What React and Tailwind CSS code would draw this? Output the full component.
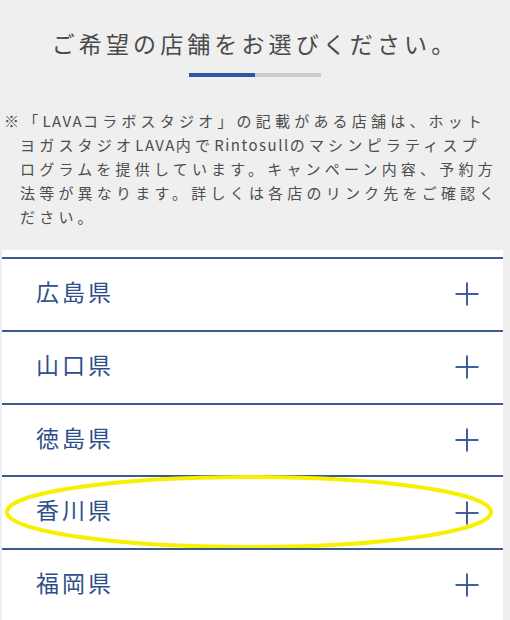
import React from "react";

const prefectures = ["広島県", "山口県", "徳島県", "香川県", "福岡県"];

const PlusIcon = () => (
  <svg width="24" height="24" viewBox="0 0 24 24" className="shrink-0">
    <path d="M12 0.5V23.5M0.5 12H23.5" stroke="#3f5f9c" strokeWidth="2" fill="none" />
  </svg>
);

// latin runs are set tighter than the kana around them
const Latin = ({ children }) => <span className="tracking-[1.5px]">{children}</span>;

const App = () => {
  return (
    <div
      className="w-[510px] h-[620px] overflow-hidden bg-[#efefef]"
      style={{ fontFamily: '"Liberation Serif", "Noto Sans CJK JP", serif' }}
    >
      {/* Heading */}
      <h1 className="pt-[31px] text-center text-[23px] leading-[30px] tracking-[4.1px] text-[#4a4a4a] font-normal">
        ご希望の店舗をお選びください。
      </h1>

      {/* Step bar */}
      <div className="mt-[12px] flex justify-center">
        <div className="flex h-[4px] w-[132px]">
          <div className="w-[66px] bg-[#2f56a0]" />
          <div className="w-[66px] bg-[#cccccc]" />
        </div>
      </div>

      {/* Note */}
      <div
        className="mt-[32px] pl-[20px] text-[15px] leading-[24px] tracking-[4.2px] text-[#4d4d4d] whitespace-nowrap"
        style={{ fontFamily: '"Noto Sans CJK JP", sans-serif' }}
      >
        <p className="-ml-[16px]">
          ※「<Latin>LAVA</Latin>コラボスタジオ」の記載がある店舗は、ホット
        </p>
        <p>
          ヨガスタジオ<Latin>LAVA</Latin>内で<Latin>Rintosull</Latin>のマシンピラティスプ
        </p>
        <p>ログラムを提供しています。キャンペーン内容、予約方</p>
        <p>法等が異なります。詳しくは各店のリンク先をご確認く</p>
        <p>ださい。</p>
      </div>

      {/* Prefecture list */}
      <div className="mt-[21px] ml-[2px] w-[501px] bg-white pt-[7px]">
        {prefectures.map((name) => (
          <div
            key={name}
            className="relative flex h-[72.75px] items-center justify-between border-t-2 border-[#3d5a8f] pl-[34px] pr-[24px]"
          >
            <span className="text-[23px] tracking-[3px] text-[#2f4f8a]">{name}</span>
            <PlusIcon />
            {name === "香川県" && (
              <svg
                className="pointer-events-none absolute left-[1px] top-[-3px]"
                width="494"
                height="78"
                viewBox="0 0 494 78"
              >
                <ellipse cx="246" cy="38" rx="242" ry="35" fill="none" stroke="#f7f000" strokeWidth="4" />
              </svg>
            )}
          </div>
        ))}
      </div>
    </div>
  );
};

export default App;
